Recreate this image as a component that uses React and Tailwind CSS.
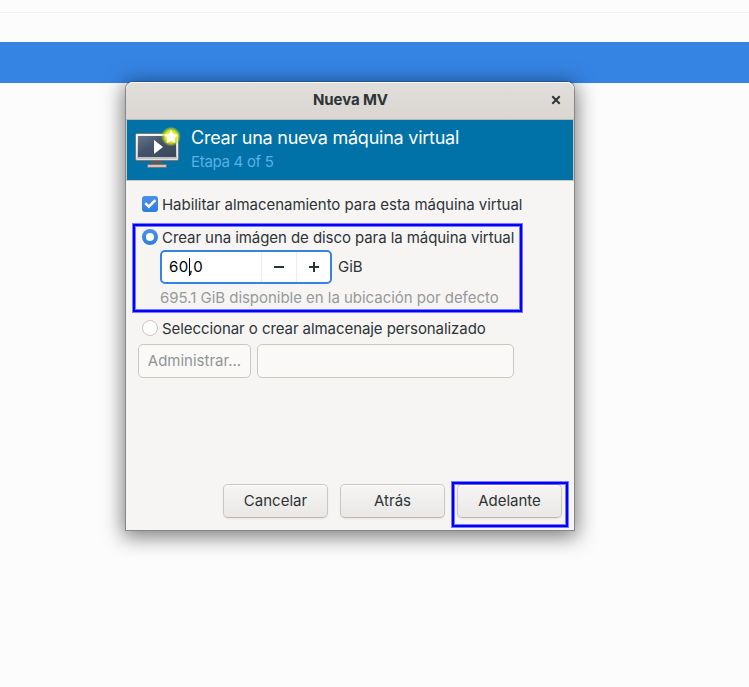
import React, { useState } from 'react'

const MonitorIcon = () => (
    <svg width="48" height="54" viewBox="0 -6 48 54" className="shrink-0">
        <defs>
            <linearGradient id="frame" x1="0" y1="0" x2="0" y2="1">
                <stop offset="0" stopColor="#f4f4f4" />
                <stop offset="1" stopColor="#bcbcbc" />
            </linearGradient>
            <linearGradient id="screen" x1="0" y1="0" x2="1" y2="1">
                <stop offset="0" stopColor="#66758c" />
                <stop offset="0.45" stopColor="#44536a" />
                <stop offset="1" stopColor="#3a475b" />
            </linearGradient>
            <radialGradient id="glow">
                <stop offset="0" stopColor="#fbff30" />
                <stop offset="0.6" stopColor="#e6ee10" stopOpacity="0.95" />
                <stop offset="0.8" stopColor="#c8dc14" stopOpacity="0.6" />
                <stop offset="1" stopColor="#9cc820" stopOpacity="0" />
            </radialGradient>
        </defs>
        <path d="M18 35h11v5H18z" fill="#5b5b5b" />
        <rect x="14.500" y="38.500" width="19" height="3" rx="0.5" fill="#c9c9c9" stroke="#7e7370" />
        <rect x="2.500" y="7.500" width="43" height="27" rx="1.500" fill="url(#frame)" stroke="#7d7776" />
        <rect x="3.500" y="8.500" width="41" height="25" rx="0.5" fill="none" stroke="#fff" strokeOpacity="0.6" />
        <rect x="5" y="10" width="38" height="21" fill="url(#screen)" />
        <path d="M21 14v14l9-7z" fill="#fff" />
        <circle cx="38" cy="10.500" r="10" fill="url(#glow)" />
        <path d="M38 4.500l2 4 4.300.6-3.200 3 .8 4.400-3.900-2.100-3.900 2.100.8-4.400-3.200-3 4.300-.6z" fill="#fff" stroke="#fff" strokeLinejoin="round" />
    </svg>
)

const Button = ({ children }) => (
    <button className="h-[34px] w-[105px] rounded-[5px] border border-[#cdc7c2] border-b-[#bfb8b1] bg-linear-to-b from-[#f6f5f4] to-[#e9e8e6] text-[15px] text-[#2e3436] shadow-[0_1px_2px_rgba(0,0,0,0.07),inset_0_1px_#fff]">
        {children}
    </button>
)

const Radio = ({ checked, onClick }) => (
    <button
        onClick={onClick}
        className={checked
            ? 'mb-[2px] flex size-4 shrink-0 items-center justify-center rounded-full bg-linear-to-b from-[#4a90e8] to-[#2f7de0]'
            : 'mb-[2px] size-4 shrink-0 rounded-full border border-[#cdc7c2] bg-white'}
    >
        {checked && <span className="size-2 rounded-full bg-white" />}
    </button>
)

export default function App() {

    const [enabled, setEnabled] = useState(true)
    const [mode, setMode] = useState('create')
    const [size, setSize] = useState(60)

    return (
        <div className="h-[687px] w-[749px] overflow-hidden bg-[#fcfcfc] font-['Inter','Noto_Sans',sans-serif] text-[15px] leading-[18px] text-[#2e3436]">
            <div className="h-[13px] border-b border-[#f1f1f1]" />
            <div className="mt-[29px] h-[41px] bg-[#3584e4]" />

            <div className="relative -mt-[2px] ml-[125px] flex h-[450px] w-[450px] flex-col rounded-t-[8px] border border-[#868686] border-t-[#1f5596] bg-[#f6f5f4] shadow-[0_4px_20px_2px_rgba(0,0,0,0.5)]">
                <div className="flex h-[38px] shrink-0 items-center rounded-t-[7px] border-b border-b-[#bfb8b1] bg-linear-to-b from-[#e1dedb] to-[#dad6d2] pb-[2px] shadow-[inset_0_1px_#f9f8f8]">
                    <span className="w-full pl-[1px] text-center font-bold tracking-[-0.1px]">Nueva MV</span>
                    <button className="-ml-[23px] mr-[13px] shrink-0">
                        <svg width="10" height="10" viewBox="0 0 10 10" fill="none" stroke="#2e3436" strokeWidth="2">
                            <path d="M1.300 1.300l7.400 7.400M8.700 1.300L1.300 8.700" />
                        </svg>
                    </button>
                </div>

                <div className="flex h-[61px] shrink-0 border-x border-b border-[#cdc7c2] bg-[#0072a8] pl-[6px]">
                    <MonitorIcon />
                    <div className="pl-[10px] pt-[6px]">
                        <h1 className="text-[18px] leading-[24px] tracking-[-0.24px] text-white">Crear una nueva máquina virtual</h1>
                        <p className="pt-[3px] tracking-[-0.3px] text-[#59b0e2]">Etapa 4 of 5</p>
                    </div>
                </div>

                <div className="flex h-[47px] shrink-0 items-center gap-1 pl-4">
                    <button
                        onClick={() => setEnabled(!enabled)}
                        className="mb-[1px] size-4 shrink-0 rounded-[3px] bg-linear-to-b from-[#4a90e8] to-[#2f7de0]"
                    >
                        {enabled && (
                            <svg width="16" height="16" viewBox="0 0 16 16" fill="none" stroke="#fff" strokeWidth="2.600">
                                <path d="M3.300 7.200l3.500 3.500 6.500-6.500" />
                            </svg>
                        )}
                    </button>
                    <span className="tracking-[-0.04px]">Habilitar almacenamiento para esta máquina virtual</span>
                </div>

                <div className="flex h-[20px] items-center gap-1 pl-4">
                    <Radio checked={mode === 'create'} onClick={() => setMode('create')} />
                    <span className="tracking-[-0.07px]">Crear una imágen de disco para la máquina virtual</span>
                </div>
                <div className="mt-[2px] flex h-[34px] shrink-0 items-center pl-[34px]">
                    <div className="flex h-[34px] w-[172px] rounded-[5px] border-2 border-[#3584e4] bg-white text-black">
                        <div className="flex w-[99px] items-center pl-[7px] tracking-[0.5px]">
                            {size}
                            <span className="-mr-px h-[18px] w-px bg-black" />,0
                        </div>
                        <button className="flex w-[35px] items-center justify-center border-l border-[#eeedec]" onClick={() => setSize(size - 1)}>
                            <span className="h-[2px] w-[10px] bg-[#2e3436]" />
                        </button>
                        <button className="flex w-[34px] items-center justify-center border-l border-[#eeedec]" onClick={() => setSize(size + 1)}>
                            <svg width="10" height="10" viewBox="0 0 10 10" stroke="#2e3436" strokeWidth="2">
                                <path d="M5 0v10M0 5h10" />
                            </svg>
                        </button>
                    </div>
                    <span className="pl-[6px]">GiB</span>
                </div>
                <p className="mt-[5px] pl-[34px] tracking-[-0.03px] text-[#969a9a]">695.1 GiB disponible en la ubicación por defecto</p>

                <div className="mt-[12px] flex h-[20px] items-center gap-1 pl-4">
                    <Radio checked={mode === 'custom'} onClick={() => setMode('custom')} />
                    <span className="tracking-[-0.07px]">Seleccionar o crear almacenaje personalizado</span>
                </div>
                <div className="mt-[5px] flex gap-[6px] pl-[12px]">
                    <button disabled className="h-[34px] w-[113px] rounded-[5px] border border-[#cdc7c2] bg-[#faf9f8] text-[#929595]">Administrar...</button>
                    <input disabled className="h-[34px] w-[257px] rounded-[5px] border border-[#cdc7c2] bg-[#faf9f8]" />
                </div>

                <div className="mt-auto mb-[12px] flex justify-end gap-3 pr-[12px]">
                    <Button>Cancelar</Button>
                    <Button>Atrás</Button>
                    <Button>Adelante</Button>
                </div>

                {/* highlight frames drawn over the form */}
                <div className="pointer-events-none absolute left-[7px] top-[142px] h-[88px] w-[389px] border-2 border-[#0000ff] shadow-[0_0_0_1px_rgba(0,0,255,0.5),inset_0_0_0_1px_rgba(0,0,255,0.5)]" />
                <div className="pointer-events-none absolute left-[326px] top-[400px] h-[45px] w-[116px] border-2 border-[#0000ff] shadow-[0_0_0_1px_rgba(0,0,255,0.5),inset_0_0_0_1px_rgba(0,0,255,0.5)]" />
            </div>
        </div>
    )
}
